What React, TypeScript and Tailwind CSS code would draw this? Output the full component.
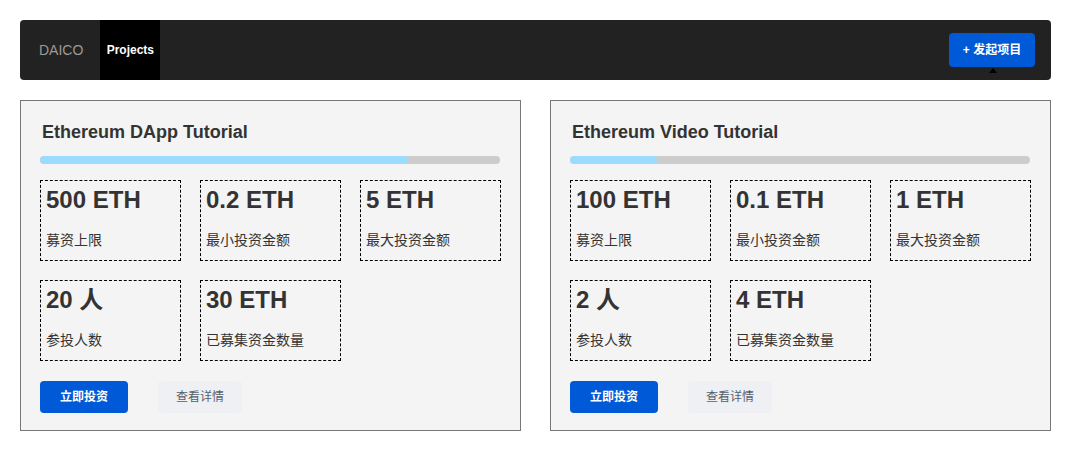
import React from 'react';

interface Stat {
  value: string;
  label: string;
}

interface Project {
  title: string;
  progress: number;
  stats: Stat[];
}

const projects: Project[] = [
  {
    title: 'Ethereum DApp Tutorial',
    progress: 80,
    stats: [
      { value: '500 ETH', label: '募资上限' },
      { value: '0.2 ETH', label: '最小投资金额' },
      { value: '5 ETH', label: '最大投资金额' },
      { value: '20 人', label: '参投人数' },
      { value: '30 ETH', label: '已募集资金数量' },
    ],
  },
  {
    title: 'Ethereum Video Tutorial',
    progress: 19,
    stats: [
      { value: '100 ETH', label: '募资上限' },
      { value: '0.1 ETH', label: '最小投资金额' },
      { value: '1 ETH', label: '最大投资金额' },
      { value: '2 人', label: '参投人数' },
      { value: '4 ETH', label: '已募集资金数量' },
    ],
  },
];

const font = { fontFamily: '"Liberation Sans", "Noto Sans CJK SC", sans-serif' };

const ProjectCard: React.FC<{ project: Project }> = ({ project }) => {
  return (
    <div className="w-[501px] h-[331px] border border-[#777] bg-[#f4f4f4] px-[19px] pt-[19px]">
      <h2 className="h-6 leading-6 pl-[2px] text-[18px] font-bold text-[#333]">{project.title}</h2>

      {/* progress */}
      <div className="mt-3 h-2 w-[460px] rounded-full bg-[#cccccc] overflow-hidden">
        <div className="h-full rounded-full bg-[#9bdcfe]" style={{ width: `${project.progress}%` }} />
      </div>

      <div className="mt-4 grid grid-cols-[141px_141px_141px] gap-x-[19px] gap-y-[19px]">
        {project.stats.map((s) => (
          <div key={s.label} className="h-[81px] border border-dashed border-black pl-[5px] pt-[5px]">
            <div className="h-7 leading-7 text-[24px] font-bold text-[#333]">{s.value}</div>
            <div className="mt-4 h-5 leading-5 text-[14px] text-[#333]">{s.label}</div>
          </div>
        ))}
      </div>

      <div className="mt-5 flex items-center">
        <button className="h-8 w-[88px] rounded-[4px] bg-[#0059d6] text-[12px] font-bold text-white">
          立即投资
        </button>
        <button className="ml-[30px] h-8 w-[84px] rounded-[4px] bg-[#eef0f3] text-[12px] text-[#56606e]">
          查看详情
        </button>
      </div>
    </div>
  );
};

const App: React.FC = () => {
  return (
    <div className="min-h-screen bg-white p-5" style={font}>
      <header className="h-[60px] rounded-[4px] bg-[#222222] flex items-center pl-[19px] pr-4">
        <span className="text-[14px] text-[#9a9a9a]">DAICO</span>
        <a className="ml-[17px] h-full w-[60px] flex items-center justify-center bg-black text-[12px] font-bold text-white">
          Projects
        </a>
        <div className="ml-auto relative">
          <button className="h-[34px] w-[86px] rounded-[4px] bg-[#0059d6] text-[12px] font-bold text-white">
            + 发起项目
          </button>
          <span className="absolute left-[40px] top-[35px] w-0 h-0 border-x-[4px] border-x-transparent border-b-[5px] border-b-black" />
        </div>
      </header>

      <div className="mt-5 flex gap-[29px]">
        {projects.map((p) => (
          <ProjectCard key={p.title} project={p} />
        ))}
      </div>
    </div>
  );
};

export default App;
